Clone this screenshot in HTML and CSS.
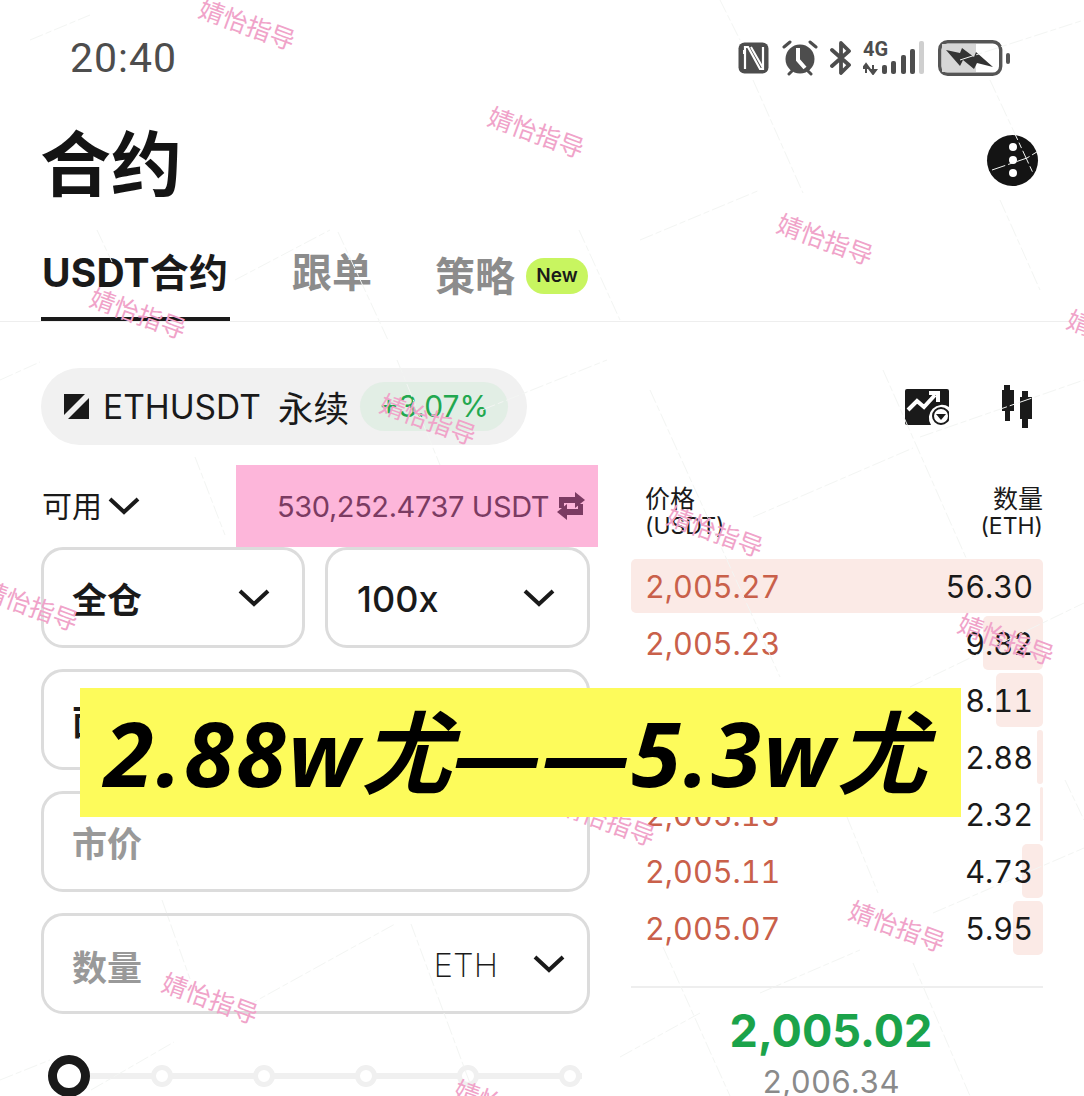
FILE: index.html
```html
<!DOCTYPE html>
<html lang="zh">
<head>
<meta charset="utf-8">
<title>合约</title>
<link rel="stylesheet" href="styles.css">
</head>
<body>
<div class="page">
  <header class="status">
    <span class="time">20:40</span>
    <div class="status-icons">
      <svg class="ic-nfc" viewBox="0 0 31 32"><rect x="0.500" y="0.500" width="30" height="31" rx="6" fill="#4d4d4d"/><path d="M7 27V5h3l12 22h3V5" fill="none" stroke="#fff" stroke-width="2.200"/><path d="M13 5l12 21M6 8l0 4" stroke="#fff" stroke-width="2"/></svg>
      <svg class="ic-alarm" viewBox="0 0 36 36"><circle cx="18" cy="19" r="14.500" fill="#4d4d4d"/><path d="M16 8v12l7 8" fill="none" stroke="#fff" stroke-width="4"/><path d="M2 7l6-5M34 7l-6-5M7 34l3-3M29 34l-3-3" stroke="#4d4d4d" stroke-width="3" stroke-linecap="round"/></svg>
      <svg class="ic-bt" viewBox="0 0 22 34"><path d="M2 9l17 15-8 8V2l8 8L2 25" fill="none" stroke="#4d4d4d" stroke-width="3.800" stroke-linejoin="round" stroke-linecap="round"/></svg>
      <svg class="ic-net" viewBox="0 0 62 34"><text x="0" y="15" class="net-g">4G</text><path d="M3 32V24M3 23l-3 4h6zM10 24v8M10 33l-3-4h6z" fill="#4d4d4d" stroke="#4d4d4d" stroke-width="2"/><rect x="19" y="24" width="5" height="9" rx="2" fill="#4d4d4d"/><rect x="28" y="20" width="5" height="13" rx="2" fill="#4d4d4d"/><rect x="38" y="14" width="5" height="19" rx="2" fill="#4d4d4d"/><rect x="47" y="8" width="5" height="25" rx="2" fill="#4d4d4d"/><rect x="56" y="0" width="5" height="33" rx="2" fill="#cfcfcf"/></svg>
      <svg class="ic-batt" viewBox="0 0 72 36"><rect x="1.700" y="1.700" width="61" height="32.600" rx="8" fill="#fff" stroke="#555" stroke-width="3.400"/><path d="M4 4h34v28H4z" fill="#d6d6d6"/><path d="M8 10l14 3 2-5 12 9 2-5 17 15-16-4-3 6-11-9-3 6z" fill="#333"/><rect x="68" y="13" width="4" height="11" rx="2" fill="#555"/></svg>
    </div>
  </header>

  <div class="title-row">
    <h1 class="title">合约</h1>
    <div class="menu"><i></i><i></i><i></i></div>
  </div>

  <nav class="tabs">
    <span class="tab tab-active">USDT合约</span>
    <span class="tab tab-mid">跟单</span>
    <span class="tab tab-low">策略</span>
    <span class="badge-new">New</span>
  </nav>

  <div class="market">
    <div class="pill">
      <svg class="ic-logo" viewBox="0 0 25 25"><path d="M0 0h21L0 21zM25 4v21H4z" fill="#1a1a1a"/></svg>
      <span class="sym">ETHUSDT</span>
      <span class="perp">永续</span>
      <span class="chg">+3.07%</span>
    </div>
    <div class="tools">
      <svg class="ic-chart" viewBox="0 0 44 36"><path d="M2 0h40a2 2 0 0 1 2 2v16a13 13 0 0 0-18 18H2a2 2 0 0 1-2-2V2a2 2 0 0 1 2-2z" fill="#1a1a1a"/><path d="M3 21l9-9 7 6 11-12M24 4h9v9" fill="none" stroke="#fff" stroke-width="4"/><circle cx="36" cy="27" r="8" fill="#fff" stroke="#1a1a1a" stroke-width="2"/><path d="M31 25h10l-5 6z" fill="#1a1a1a"/></svg>
      <svg class="ic-candle" viewBox="0 0 30 43"><path d="M2 0h6v5h4v21H8v10H3V26H0V5h2zM20 6h6v6h4v22h-4v9h-6v-9h-2V12h2z" fill="#1a1a1a"/></svg>
    </div>
  </div>

  <main class="trade">
    <section class="form">
      <div class="avail">
        <span class="avail-label">可用<svg class="chev chev-sm" viewBox="0 0 32 18"><path d="M2 2l14 13L30 2" /></svg></span>
        <span class="avail-val">530,252.4737 USDT<svg class="ic-swap" viewBox="0 0 28 28"><path d="M18 0l10 8-10 8v-5H7v5H2V5h16zM10 28L0 20l10-8v5h11v-5h5v11H10z" fill="#7b3b62"/></svg></span>
      </div>
      <div class="selects">
        <div class="field sel"><span class="strong">全仓</span><svg class="chev" viewBox="0 0 32 18"><path d="M2 2l14 13L30 2"/></svg></div>
        <div class="field sel sel-lev"><span class="lev">100x</span><svg class="chev" viewBox="0 0 32 18"><path d="M2 2l14 13L30 2"/></svg></div>
      </div>
      <div class="field"><span class="ph ph-dark">面</span></div>
      <div class="field"><span class="ph">市价</span></div>
      <div class="field qty"><span class="ph">数量</span><span class="unit">ETH</span><svg class="chev" viewBox="0 0 32 18"><path d="M2 2l14 13L30 2"/></svg></div>
      <div class="slider">
        <span class="thumb"></span><span class="dot"></span><span class="dot"></span><span class="dot"></span><span class="dot"></span><span class="dot"></span>
      </div>
    </section>

    <section class="book">
      <div class="book-head">
        <span>价格<br><span class="head-unit">(USDT)</span></span>
        <span class="r">数量<br><span class="head-unit">(ETH)</span></span>
      </div>
      <div class="rows">
        <div class="row"><i class="bar" style="width:412px"></i><span class="p">2,005.27</span><span class="q">56.30</span></div>
        <div class="row"><i class="bar" style="width:60px"></i><span class="p">2,005.23</span><span class="q">9.82</span></div>
        <div class="row"><i class="bar" style="width:47px"></i><span class="p">2,005.19</span><span class="q">8.11</span></div>
        <div class="row"><i class="bar" style="width:6px"></i><span class="p">2,005.17</span><span class="q">2.88</span></div>
        <div class="row"><i class="bar" style="width:3px"></i><span class="p">2,005.15</span><span class="q">2.32</span></div>
        <div class="row"><i class="bar" style="width:21px"></i><span class="p">2,005.11</span><span class="q">4.73</span></div>
        <div class="row"><i class="bar" style="width:30px"></i><span class="p">2,005.07</span><span class="q">5.95</span></div>
      </div>
      <div class="mid">
        <div class="last">2,005.02</div>
        <div class="mark">2,006.34</div>
      </div>
    </section>
  </main>

  <svg class="cracks" viewBox="0 0 1084 1096">
    <path d="M650 390L780 677M883 370L967 560M847 817L878 893M663 947L730 1096M913 963L970 1096M1065 780L1084 820M753 80L803 193M990 80L1033 173M195 457L225 535M397 360L440 465M162 900L190 979M411 924L478 1105M97 230L112 262M338 232L388 340M579 230L620 320M720 0L740 40M1000 200L1040 290"/>
    <path d="M753 517L913 448M910 687L1084 603M920 437L1084 380M620 1057L700 1013M933 913L1084 848M760 993L860 950M245 1007L395 924M91 1090L174 1042M235 280L330 230M482 410L607 360M992 170L1027 158L1040 150M0 380L40 362M0 1080L50 1060M960 60L1084 20M640 240L760 190M30 40L90 15"/>
  </svg>

  <div class="wm wm1">婧怡指导</div>
  <div class="wm wm2">婧怡指导</div>
  <div class="wm wm3">婧怡指导</div>
  <div class="wm wm4">婧怡指导</div>
  <div class="wm wm5">婧怡指导</div>
  <div class="wm wm6">婧怡指导</div>
  <div class="wm wm7">婧怡指导</div>
  <div class="wm wm8">婧怡指导</div>
  <div class="wm wm9">婧怡指导</div>
  <div class="wm wm10">婧怡指导</div>
  <div class="wm wm11">婧怡指导</div>
  <div class="wm wm12">婧怡指导</div>
  <div class="wm wm13">婧怡指导</div>

  <div class="banner">2.88w尤——5.3w尤</div>
</div>
</body>
</html>
```
FILE: styles.css
```css
* { box-sizing: border-box; }
html, body { margin: 0; padding: 0; background: #fff; }
body { font-family: "Inter", "Noto Sans CJK SC", sans-serif; color: #1a1a1a; }
.page { position: relative; width: 1084px; height: 1096px; overflow: hidden; background: #fff; }

.status { height: 116px; padding: 0 74px 0 70px; display: flex; justify-content: space-between; align-items: center; }
.time { font-family: "Roboto", sans-serif; font-size: 41px; color: #4d4d4d; letter-spacing: 1px; }
.status-icons { display: flex; align-items: center; }
.ic-nfc { width: 31px; height: 32px; margin-right: 13px; }
.ic-alarm { width: 36px; height: 36px; margin-right: 12px; }
.ic-bt { width: 22px; height: 34px; margin-right: 11px; }
.ic-net { width: 62px; height: 34px; margin-right: 13px; }
.net-g { font-family: "Roboto", sans-serif; font-size: 20px; font-weight: 700; fill: #4d4d4d; }
.ic-batt { width: 72px; height: 36px; }

.title-row { height: 96px; padding: 0 46px 0 40px; display: flex; justify-content: space-between; align-items: center; }
.title { margin: 0; font-size: 71px; font-weight: 700; line-height: 96px; color: #141414; }
.menu { width: 51px; height: 51px; margin-bottom: 8px; border-radius: 50%; background: #141414; display: flex; flex-direction: column; align-items: center; justify-content: center; gap: 5px; }
.menu i { width: 8px; height: 8px; border-radius: 50%; background: #fff; }

.tabs { height: 110px; padding: 0 0 0 41px; display: flex; align-items: flex-start; border-bottom: 1px solid #eee; }
.tab { font-size: 40px; font-weight: 700; line-height: 56px; margin: 33px 0 0; color: #8c8c8c; }
.tab-active { color: #1a1a1a; height: 76px; width: 189px; margin-right: 62px; padding-left: 1px; border-bottom: 4px solid #1a1a1a; font-size: 39px; letter-spacing: 0.2px; white-space: nowrap; }
.tab-mid { margin-right: 63px; }
.tab-low { margin: 37px 11px 0 0; }
.badge-new { margin-top: 46px; width: 62px; height: 36px; border-radius: 18px; background: #c8f560; font-size: 19px; font-weight: 600; line-height: 36px; text-align: center; color: #1a1a1a; }

.market { margin-top: 46px; height: 77px; padding: 0 52px 0 41px; display: flex; justify-content: space-between; align-items: center; }
.pill { width: 486px; height: 77px; border-radius: 39px; background: #f1f1f1; display: flex; align-items: center; padding-left: 23px; }
.ic-logo { width: 25px; height: 25px; margin-right: 14px; flex: none; }
.sym { font-size: 33.500px; font-weight: 400; margin-right: 17px; }
.perp { font-size: 35.500px; margin-right: 11px; }
.chg { width: 148px; height: 49px; border-radius: 25px; background: #e2eee5; color: #22a84f; font-size: 30px; line-height: 49px; text-align: center; }
.tools { display: flex; align-items: center; gap: 53px; }
.ic-chart { width: 44px; height: 36px; }
.ic-candle { width: 30px; height: 43px; }

.trade { margin-top: 20px; padding: 0 41px; display: grid; grid-template-columns: 549px 412px; column-gap: 41px; }
.form { display: flex; flex-direction: column; gap: 21px; }
.avail { height: 82px; margin: 0 -8px -21px 0; display: flex; justify-content: space-between; align-items: center; }
.avail-label { font-size: 30px; line-height: 40px; display: flex; align-items: center; gap: 6px; padding: 0 0 1px 1px; }
.avail-val { width: 362px; height: 82px; background: #fdb6da; color: #7b3b62; font-size: 29px; letter-spacing: -0.4px; display: flex; align-items: center; padding-left: 41px; white-space: nowrap; }
.ic-swap { width: 28px; height: 28px; margin-left: 8px; flex: none; }
.chev { width: 32px; height: 18px; flex: none; }
.chev path { fill: none; stroke: #1a1a1a; stroke-width: 4; }
.chev-sm { width: 32px; }
.selects { display: grid; grid-template-columns: 264px 265px; column-gap: 20px; }
.field { height: 101px; border: 3px solid #dcdcdc; border-radius: 22px; display: flex; align-items: center; padding: 0 22px 0 28px; }
.sel { justify-content: space-between; padding-right: 32px; }
.sel-lev { padding-left: 29px; }
.strong { font-size: 35px; font-weight: 700; }
.lev { font-size: 36px; font-weight: 500; padding-top: 2px; }
.ph { font-size: 35px; font-weight: 700; color: #999; }
.ph-dark { color: #1a1a1a; }
.qty .ph { padding-top: 3px; }
.unit { margin-left: auto; margin-right: 35px; padding-top: 3px; font-size: 33px; font-weight: 200; }
.slider { height: 42px; margin: 20px 0 0 7px; width: 534px; display: flex; align-items: center; gap: 80px; background: linear-gradient(#f0f0f0, #f0f0f0) center / 100% 6px no-repeat; }
.thumb { width: 42px; height: 42px; margin-right: -19px; border-radius: 50%; border: 9px solid #1a1a1a; background: #fff; flex: none; }
.dot { width: 22px; height: 22px; border-radius: 50%; border: 5px solid #f0f0f0; background: #fff; flex: none; }

.book { display: flex; flex-direction: column; }
.book-head { height: 94px; padding: 21px 0 0 14px; display: flex; justify-content: space-between; font-size: 25px; line-height: 26px; color: #1a1a1a; }
.head-unit { font-size: 23px; }
.book-head .r { text-align: right; }
.rows { display: flex; flex-direction: column; gap: 3px; }
.row { position: relative; height: 54px; padding: 0 10px 0 14px; display: flex; justify-content: space-between; align-items: center; font-size: 30.600px; font-variant-numeric: tabular-nums; }
.bar { position: absolute; right: 0; top: 0; bottom: 0; background: #fbeae6; border-radius: 5px; }
.p { position: relative; color: #c9604a; }
.q { position: relative; color: #1a1a1a; }
.mid { margin-top: 31px; padding-right: 12px; border-top: 2px solid #eee; text-align: center; }
.last { margin-top: 15px; font-size: 45px; font-weight: 700; line-height: 56px; color: #1ba34a; }
.mark { font-size: 31px; line-height: 46px; color: #8a8a8a; font-variant-numeric: tabular-nums; }

.cracks { position: absolute; left: 0; top: 0; width: 1084px; height: 1096px; pointer-events: none; }
.cracks path { fill: none; stroke: #f3f5f3; stroke-width: 1; stroke-dasharray: 14 3 6 3; }

.wm { position: absolute; font-size: 25px; line-height: 32px; color: #f0a3c9; transform: rotate(20deg); white-space: nowrap; }
.wm1 { left: 197px; top: 9px; }
.wm2 { left: 486px; top: 117px; }
.wm3 { left: 775px; top: 224px; }
.wm4 { left: 88px; top: 298px; }
.wm5 { left: 1065px; top: 320px; }
.wm6 { left: 378px; top: 404px; }
.wm7 { left: 665px; top: 516px; }
.wm8 { left: -20px; top: 590px; }
.wm9 { left: 956px; top: 624px; }
.wm10 { left: 557px; top: 805px; }
.wm11 { left: 847px; top: 911px; }
.wm12 { left: 160px; top: 983px; }
.wm13 { left: 452px; top: 1090px; }

.banner { position: absolute; left: 80px; top: 688px; width: 881px; height: 129px; background: #fdfb5b; padding-left: 24px; font-family: "Open Sans", "Noto Sans CJK SC", sans-serif; font-weight: 700; font-style: italic; font-size: 90px; letter-spacing: 2.400px; line-height: 129px; color: #000; white-space: nowrap; }
```
